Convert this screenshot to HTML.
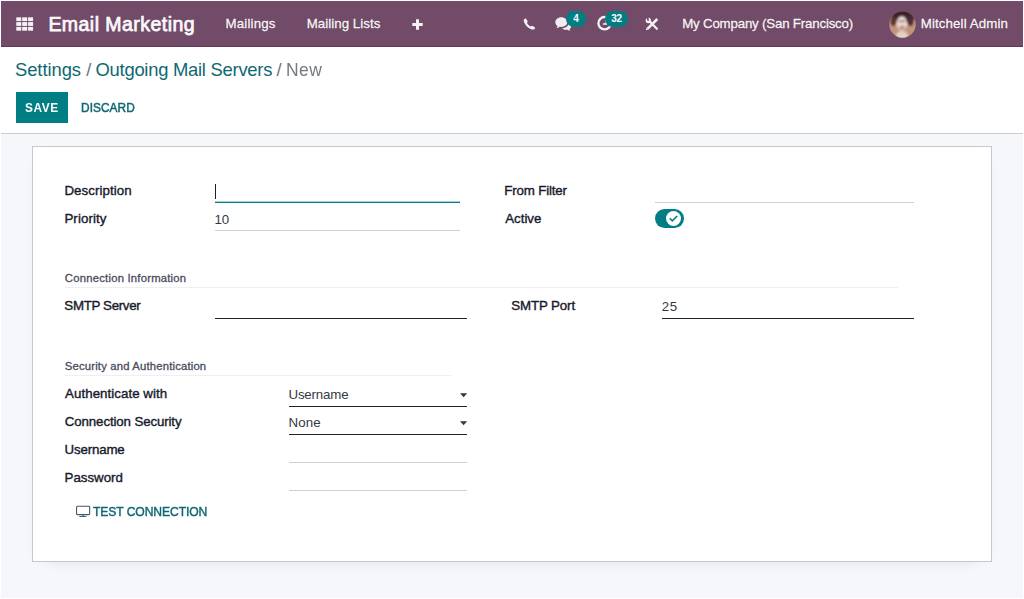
<!DOCTYPE html>
<html lang="en">
<head>
<meta charset="utf-8">
<title>Odoo - Outgoing Mail Servers</title>
<style>
html,body{margin:0;padding:0;}
body{width:1024px;height:599px;position:relative;overflow:hidden;background:#fff;font-family:"Liberation Sans",sans-serif;}
.a{position:absolute;display:block;}
.t{position:absolute;display:block;white-space:nowrap;line-height:1;font-family:"Liberation Sans",sans-serif;}
#bg{left:1px;top:1px;width:1022px;height:597px;background:#f6f7fa;}
#nav{left:1px;top:1px;width:1022px;height:46px;background:#714b67;box-sizing:border-box;border-bottom:1px solid #5a3c52;}
#cp{left:1px;top:47px;width:1022px;height:87px;background:#fff;box-sizing:border-box;border-bottom:1px solid #cbccd4;}
#save{left:16px;top:92px;width:52px;height:31px;background:#017e84;}
#sheet{left:32px;top:146px;width:960px;height:416px;box-sizing:border-box;background:#fff;border:1px solid #c6c7cf;box-shadow:0 5px 18px -14px rgba(0,0,0,0.28);}
.ln{position:absolute;height:1px;}
.g{background:#cfcfd2;}
.d{background:#20222e;}
.s{background:#efeff2;}
.badge{position:absolute;height:16px;border-radius:8px;background:#017e84;}
svg{position:absolute;overflow:visible;}
</style>
</head>
<body>
<div class="a" id="bg"></div>
<div class="a" id="nav"></div>
<div class="a" id="cp"></div>
<div class="a" id="save"></div>
<div class="a" id="sheet"></div>

<!-- field underlines -->
<div class="ln" style="left:215px;top:202px;width:245px;background:#017e84;"></div>
<div class="ln" style="left:215px;top:201px;width:245px;background:#017e84;opacity:.35;"></div>
<div class="ln" style="left:215px;top:184px;width:1px;height:15px;background:#1b1d2a;"></div>
<div class="ln g" style="left:215px;top:230px;width:245px;"></div>
<div class="ln g" style="left:655px;top:202px;width:259px;"></div>
<div class="ln s" style="left:65px;top:287px;width:833px;"></div>
<div class="ln d" style="left:215px;top:318px;width:252px;"></div>
<div class="ln d" style="left:662px;top:318px;width:252px;"></div>
<div class="ln s" style="left:65px;top:375px;width:386px;"></div>
<div class="ln d" style="left:289px;top:406px;width:178px;"></div>
<div class="ln d" style="left:289px;top:434px;width:178px;"></div>
<div class="ln g" style="left:289px;top:462px;width:178px;"></div>
<div class="ln g" style="left:289px;top:490px;width:178px;"></div>

<!-- select carets -->
<svg style="left:460px;top:393px;" width="8" height="5" viewBox="0 0 8 5"><path d="M0 0.2h7.2l-3.6 4.1z" fill="#34364a"/></svg>
<svg style="left:460px;top:421px;" width="8" height="5" viewBox="0 0 8 5"><path d="M0 0.2h7.2l-3.6 4.1z" fill="#34364a"/></svg>

<!-- toggle -->
<div class="a" style="left:655px;top:209px;width:29px;height:19px;border-radius:9.5px;background:#017e84;"></div>
<div class="a" style="left:666px;top:211px;width:15px;height:15px;border-radius:50%;background:#fff;"></div>
<svg style="left:666px;top:211px;" width="15" height="15" viewBox="0 0 15 15"><path d="M3.7 7.3l2.6 2.6l4.9-4.9" fill="none" stroke="#017e84" stroke-width="1.5"/></svg>

<!-- app grid icon -->
<svg style="left:16px;top:17px;" width="18" height="14" viewBox="0 0 18 14" fill="#f6f1f5">
<rect x="0.3" y="0.3" width="5" height="3.8"/><rect x="6.2" y="0.3" width="5" height="3.8"/><rect x="12.1" y="0.3" width="5" height="3.8"/>
<rect x="0.3" y="5.1" width="5" height="3.8"/><rect x="6.2" y="5.1" width="5" height="3.8"/><rect x="12.1" y="5.1" width="5" height="3.8"/>
<rect x="0.3" y="9.9" width="5" height="3.8"/><rect x="6.2" y="9.9" width="5" height="3.8"/><rect x="12.1" y="9.9" width="5" height="3.8"/>
</svg>

<!-- plus -->
<svg style="left:412px;top:19px;" width="11" height="11" viewBox="0 0 11 11"><path d="M4 0.3h3v3.7h3.7v3H7v3.7H4V7H0.3V4H4z" fill="#f6f1f5"/></svg>

<!-- phone -->
<svg style="left:523px;top:17.6px;" width="13" height="12" viewBox="0 0 13 12"><path d="M1.2 1.2 C2 0.4 2.8 0.3 3.3 1 L4.6 3.2 C4.9 3.8 4.4 4.3 3.9 4.8 C4.6 6.6 6.2 8 8 8.6 C8.5 8 9 7.6 9.6 7.9 L11.8 9.2 C12.4 9.7 12.2 10.4 11.6 11 C10.6 11.8 9.2 11.6 7.6 10.9 C4.6 9.6 2.2 7 1.1 4.2 C0.6 2.9 0.6 1.9 1.2 1.2z" fill="#f6f1f5"/></svg>

<!-- chat -->
<svg style="left:555px;top:16.8px;" width="17" height="14" viewBox="0 0 17 14" fill="#f1ecf1">
<path d="M6.3 0.2 C9.7 0.2 12.3 2.4 12.3 5.1 C12.3 7.8 9.7 10 6.3 10 C5.7 10 5.2 9.95 4.7 9.85 C3.7 10.7 2.6 11.1 1.3 11.2 C1.9 10.6 2.3 9.9 2.5 9.1 C1.1 8.2 0.3 6.8 0.3 5.1 C0.3 2.4 2.9 0.2 6.3 0.2z"/>
<path d="M13.2 6.2 C15 6.9 16.2 8.1 16.2 9.5 C16.2 10.6 15.5 11.6 14.4 12.2 C14.6 12.8 15 13.3 15.6 13.8 C14.4 13.7 13.3 13.3 12.4 12.7 C12 12.8 11.6 12.8 11.2 12.8 C9.5 12.8 8 12.3 7 11.4 C8.6 11.3 10.6 10.9 12 9.6 C12.9 8.7 13.3 7.5 13.2 6.2z"/>
</svg>
<div class="badge" style="left:566px;top:11px;width:20px;"></div>

<!-- clock -->
<svg style="left:597px;top:16px;" width="15" height="15" viewBox="0 0 15 15"><circle cx="7.6" cy="7.2" r="6.2" fill="none" stroke="#f6f1f5" stroke-width="2.3"/><path d="M9.3 4v4h-3.4" fill="none" stroke="#f6f1f5" stroke-width="1.7"/></svg>
<div class="badge" style="left:605px;top:11px;width:23px;"></div>

<!-- tools -->
<svg style="left:645px;top:17px;" width="14" height="14" viewBox="0 0 14 14" fill="none" stroke="#f6f1f5">
<path d="M12.3 2 L2.7 11.6" stroke-width="2.6" stroke-linecap="butt"/>
<path d="M0.8 13.2 L1.6 10.4 L3.8 12.6 z" fill="#f6f1f5" stroke="none"/>
<path d="M5 4.8 L11.9 11.7" stroke-width="2.3" stroke-linecap="round"/>
<circle cx="3.3" cy="3.5" r="2.65" fill="#f6f1f5" stroke="none"/><path d="M3.1 3.1 L2.3 0.2" stroke="#714b67" stroke-width="1.7" stroke-linecap="round"/>
</svg>

<!-- avatar -->
<svg style="left:889px;top:10.5px;" width="27" height="27" viewBox="0 0 27 27">
<defs><clipPath id="avc"><circle cx="13.5" cy="13.5" r="13.2"/></clipPath><filter id="avb" x="-20%" y="-20%" width="140%" height="140%"><feGaussianBlur stdDeviation="0.9"/></filter></defs>
<g clip-path="url(#avc)"><rect width="27" height="27" fill="#bf957d"/>
<g filter="url(#avb)">
<ellipse cx="14" cy="5" rx="12" ry="7.5" fill="#3a202c"/>
<ellipse cx="4.5" cy="10" rx="3" ry="5" fill="#5b3436"/>
<ellipse cx="21.5" cy="9" rx="3" ry="6" fill="#4a2a32"/>
<ellipse cx="12.8" cy="12.5" rx="5.2" ry="7.2" fill="#eddcd3"/>
<ellipse cx="13" cy="24.5" rx="6" ry="4.5" fill="#e3d0c6"/>
<ellipse cx="13" cy="16.5" rx="2.8" ry="2" fill="#8c4a3c" opacity="0.55"/>
<ellipse cx="12.8" cy="10.2" rx="3.6" ry="1" fill="#5a3a3a" opacity="0.6"/>
</g></g>
</svg>

<!-- desktop icon for test connection -->
<svg style="left:76px;top:505px;" width="15" height="13" viewBox="0 0 15 13" fill="none" stroke="#43586c">
<rect x="0.55" y="1.3" width="13.1" height="8.3" rx="0.9" stroke-width="1.1"/>
<path d="M7.1 9.8v1.5" stroke-width="1.2"/><path d="M3.4 11.5h7" stroke-width="1" stroke="#2f6f7a"/>
</svg>

<span class="t" style="left:48.40px;top:14.99px;font-size:19.5px;color:#fbf8fb;letter-spacing:0.457px;-webkit-text-stroke:0.75px #fbf8fb;">Email Marketing</span>
<span class="t" style="left:225.50px;top:16.74px;font-size:13.3px;color:rgba(255,255,255,0.93);letter-spacing:0.161px;-webkit-text-stroke:0.28px rgba(255,255,255,0.93);">Mailings</span>
<span class="t" style="left:306.64px;top:16.74px;font-size:13.3px;color:rgba(255,255,255,0.93);letter-spacing:0.050px;-webkit-text-stroke:0.28px rgba(255,255,255,0.93);">Mailing Lists</span>
<span class="t" style="left:682.15px;top:16.74px;font-size:13.3px;color:rgba(255,255,255,0.93);letter-spacing:-0.192px;-webkit-text-stroke:0.28px rgba(255,255,255,0.93);">My Company (San Francisco)</span>
<span class="t" style="left:920.79px;top:16.74px;font-size:13.3px;color:rgba(255,255,255,0.93);letter-spacing:0.105px;-webkit-text-stroke:0.28px rgba(255,255,255,0.93);">Mitchell Admin</span>
<span class="t" style="left:15.00px;top:60.92px;font-size:18.4px;color:#0e6872;letter-spacing:-0.065px;">Settings</span>
<span class="t" style="left:86.18px;top:60.92px;font-size:18.4px;color:#6c757d;letter-spacing:0.000px;">/</span>
<span class="t" style="left:95.55px;top:60.92px;font-size:18.4px;color:#0e6872;letter-spacing:-0.255px;">Outgoing Mail Servers</span>
<span class="t" style="left:276.60px;top:60.92px;font-size:18.4px;color:#6c757d;letter-spacing:0.000px;">/</span>
<span class="t" style="left:285.85px;top:60.92px;font-size:18.4px;color:#727a82;letter-spacing:0.441px;transform:scaleX(0.95);transform-origin:0 0;">New</span>
<span class="t" style="left:24.60px;top:101.23px;font-size:13.2px;color:#ffffff;letter-spacing:0.666px;font-weight:700;transform:scaleX(0.9);transform-origin:0 0;">SAVE</span>
<span class="t" style="left:80.80px;top:100.73px;font-size:13.2px;color:#0e6872;letter-spacing:0.060px;transform:scaleX(0.9);transform-origin:0 0;-webkit-text-stroke:0.5px #0e6872;">DISCARD</span>
<span class="t" style="left:64.40px;top:184.24px;font-size:13.3px;color:#171a2c;letter-spacing:0.073px;-webkit-text-stroke:0.38px #171a2c;">Description</span>
<span class="t" style="left:64.40px;top:212.24px;font-size:13.3px;color:#171a2c;letter-spacing:0.094px;-webkit-text-stroke:0.38px #171a2c;">Priority</span>
<span class="t" style="left:504.25px;top:184.24px;font-size:13.3px;color:#171a2c;letter-spacing:-0.159px;-webkit-text-stroke:0.38px #171a2c;">From Filter</span>
<span class="t" style="left:505.25px;top:212.24px;font-size:13.3px;color:#171a2c;letter-spacing:-0.013px;-webkit-text-stroke:0.38px #171a2c;">Active</span>
<span class="t" style="left:214.45px;top:213.14px;font-size:13.3px;color:#353843;letter-spacing:-0.059px;">10</span>
<span class="t" style="left:64.86px;top:272.73px;font-size:11.3px;color:#4a4c5c;letter-spacing:0.211px;-webkit-text-stroke:0.3px #4a4c5c;">Connection Information</span>
<span class="t" style="left:64.35px;top:299.24px;font-size:13.3px;color:#171a2c;letter-spacing:-0.327px;-webkit-text-stroke:0.38px #171a2c;">SMTP Server</span>
<span class="t" style="left:511.35px;top:299.24px;font-size:13.3px;color:#171a2c;letter-spacing:-0.128px;-webkit-text-stroke:0.38px #171a2c;">SMTP Port</span>
<span class="t" style="left:661.71px;top:299.74px;font-size:13.3px;color:#353843;letter-spacing:0.737px;">25</span>
<span class="t" style="left:64.80px;top:360.63px;font-size:11.3px;color:#4a4c5c;letter-spacing:0.170px;-webkit-text-stroke:0.3px #4a4c5c;">Security and Authentication</span>
<span class="t" style="left:65.10px;top:387.24px;font-size:13.3px;color:#171a2c;letter-spacing:0.046px;-webkit-text-stroke:0.38px #171a2c;">Authenticate with</span>
<span class="t" style="left:64.83px;top:415.24px;font-size:13.3px;color:#171a2c;letter-spacing:-0.125px;-webkit-text-stroke:0.38px #171a2c;">Connection Security</span>
<span class="t" style="left:64.60px;top:443.24px;font-size:13.3px;color:#171a2c;letter-spacing:-0.177px;-webkit-text-stroke:0.38px #171a2c;">Username</span>
<span class="t" style="left:64.54px;top:471.24px;font-size:13.3px;color:#171a2c;letter-spacing:0.004px;-webkit-text-stroke:0.38px #171a2c;">Password</span>
<span class="t" style="left:288.45px;top:387.84px;font-size:13.3px;color:#353843;letter-spacing:-0.163px;">Username</span>
<span class="t" style="left:288.45px;top:415.84px;font-size:13.3px;color:#353843;letter-spacing:0.136px;">None</span>
<span class="t" style="left:93.39px;top:505.43px;font-size:13.2px;color:#0e6872;letter-spacing:-0.105px;transform:scaleX(0.92);transform-origin:0 0;-webkit-text-stroke:0.45px #0e6872;">TEST CONNECTION</span>
<span class="t" style="left:573.27px;top:13.54px;font-size:10px;color:#ffffff;letter-spacing:0.000px;font-weight:700;">4</span>
<span class="t" style="left:611.35px;top:13.54px;font-size:10px;color:#ffffff;letter-spacing:-0.448px;font-weight:700;">32</span>
</body>
</html>
